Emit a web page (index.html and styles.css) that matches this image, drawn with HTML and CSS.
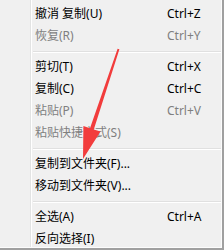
FILE: index.html
```html
<!DOCTYPE html>
<html lang="zh-CN">
<head>
    <meta charset="UTF-8">
    <title>右键菜单</title>
    <link rel="stylesheet" href="styles.css">
</head>
<body>
    <div class="menu">
        <div class="menu-inner">
            <ul class="menu-list">
                <li class="item"><span>撤消 复制(U)</span><span class="key">Ctrl+Z</span></li>
                <li class="item disabled"><span>恢复(R)</span><span class="key">Ctrl+Y</span></li>
                <li class="sep"></li>
                <li class="item"><span>剪切(T)</span><span class="key">Ctrl+X</span></li>
                <li class="item"><span>复制(C)</span><span class="key">Ctrl+C</span></li>
                <li class="item disabled"><span>粘贴(P)</span><span class="key">Ctrl+V</span></li>
                <li class="item disabled"><span>粘贴快捷方式(S)</span></li>
                <li class="sep"></li>
                <li class="item"><span>复制到文件夹(F)...</span></li>
                <li class="item"><span>移动到文件夹(V)...</span></li>
                <li class="sep"></li>
                <li class="item"><span>全选(A)</span><span class="key">Ctrl+A</span></li>
                <li class="item"><span>反向选择(I)</span></li>
            </ul>
        </div>
        <!-- 标注箭头 -->
        <svg class="arrow" width="224" height="250" viewBox="0 0 224 250">
            <polygon fill="#f23c3c" points="117.6,48.8 119.4,49.3 93.8,129.5 100.5,131.6 83,159 83.4,126 90.0,128.3"/>
        </svg>
    </div>
</body>
</html>
```

FILE: styles.css
```css
body {
    margin: 0;
}

.menu {
    position: relative;
    width: 222px;
    height: 248px;
    background-color: #f0f0f0;
    border-right: 2px solid #a0a0a0;
    border-bottom: 2px solid #a0a0a0;
    font-family: "Noto Sans", "Noto Sans CJK SC", sans-serif;
    font-size: 12px;
    color: #000;
}

.menu-inner {
    height: 247px;
    border-right: 1px solid #fcfcfc;
    border-bottom: 1px solid #fcfcfc;
    background: linear-gradient(to right, transparent 30px, #e2e3e3 30px, #e2e3e3 31px, #fff 31px, #fff 32px, transparent 32px);
}

.menu-list {
    margin: 0;
    padding: 3px 0 0;
    list-style: none;
}

.item {
    display: grid;
    grid-template-columns: 132px auto;
    height: 22px;
    line-height: 22px;
    padding-left: 35px;
    white-space: nowrap;
}

.item.disabled {
    color: #7f7f7f;
}

.sep {
    height: 1px;
    margin: 4px 0 3px 33px;
    border-top: 1px solid #e0e0e0;
    background-color: #fff;
}

.arrow {
    position: absolute;
    top: 0;
    left: 0;
}
```
